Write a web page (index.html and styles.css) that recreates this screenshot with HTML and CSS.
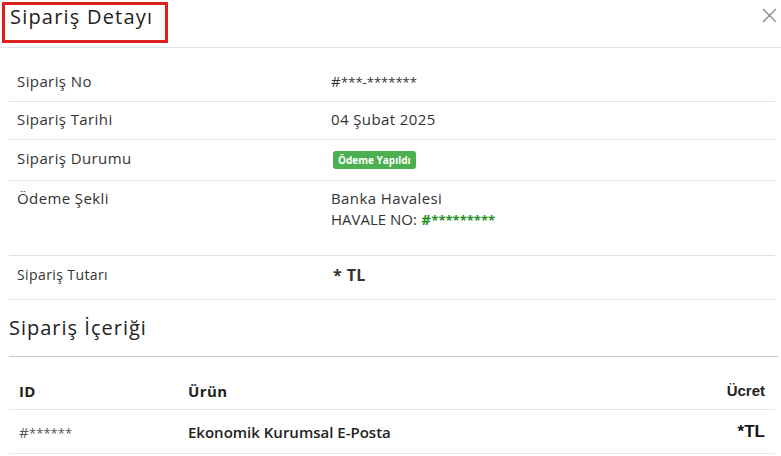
FILE: index.html
```html
<!DOCTYPE html>
<html lang="tr">
<head>
<meta charset="utf-8">
<title>Sipariş Detayı</title>
<link rel="stylesheet" href="styles.css">
</head>
<body>
<div class="modal">
  <div class="modal-header">
    <h4 class="modal-title">Sipariş Detayı</h4>
    <button class="close" aria-label="Kapat">
      <svg width="15" height="15" viewBox="0 0 15 15"><path d="M1 1L14 14M14 1L1 14" stroke="#8a8a8a" stroke-width="1.4" fill="none"/></svg>
    </button>
  </div>
  <div class="modal-body">
    <table class="details">
      <tr class="r1"><td class="lbl">Sipariş No</td><td class="val">#<span class="stars">***-*******</span></td></tr>
      <tr class="r1"><td class="lbl">Sipariş Tarihi</td><td class="val">04 Şubat 2025</td></tr>
      <tr class="status-row"><td class="lbl">Sipariş Durumu</td><td class="val"><span class="badge">Ödeme Yapıldı</span></td></tr>
      <tr class="pay-row"><td class="lbl">Ödeme Şekli</td><td class="val">Banka Havalesi<br><span class="caps">HAVALE NO:</span> <b class="green">#<span class="stars">*********</span></b></td></tr>
      <tr class="total-row"><td class="lbl small">Sipariş Tutarı</td><td class="val"><b class="total">* TL</b></td></tr>
    </table>
    <h4 class="section-title">Sipariş İçeriği</h4>
    <table class="items">
      <thead>
        <tr><th class="c-id">ID</th><th class="c-prod">Ürün</th><th class="c-price">Ücret</th></tr>
      </thead>
      <tbody>
        <tr><td class="c-id muted">#<span class="stars">******</span></td><td class="c-prod strong">Ekonomik Kurumsal E-Posta</td><td class="c-price price">*TL</td></tr>
      </tbody>
    </table>
  </div>
</div>
</body>
</html>
```
FILE: styles.css
```css
html, body {
  margin: 0;
  padding: 0;
  background: #fff;
}
body {
  font-family: "Open Sans", "Liberation Sans", sans-serif;
  color: #333;
  font-size: 15px;
  letter-spacing: 0.4px;
}
.modal {
  width: 781px;
}
.modal-header {
  display: flex;
  align-items: flex-start;
  justify-content: space-between;
  height: 48px;
  border-bottom: 1px solid #e5e5e5;
  padding: 2px 4px 0 2px;
  box-sizing: border-box;
}
.modal-title {
  margin: 0;
  width: 166px;
  height: 41px;
  box-sizing: border-box;
  border: 3px solid #e0201e;
  padding: 0 0 0 5px;
  font-size: 20px;
  font-weight: 400;
  letter-spacing: 1.2px;
  line-height: 24px;
  color: #222;
}
.close {
  background: none;
  border: 0;
  padding: 0;
  margin-top: 6px;
  width: 15px;
  height: 15px;
  display: flex;
}
.modal-body {
  padding: 16px 6px 0 9px;
}
table {
  width: 100%;
  border-collapse: collapse;
}
.details td {
  padding: 8px 8px 7px;
  line-height: 22px;
  border-bottom: 1px solid #e2e2e2;
  vertical-align: top;
  color: #333;
}
.details .r1 td {
  padding-top: 6px;
  padding-bottom: 9px;
}
.details .lbl {
  width: 298px;
}
.stars {
  font-size: 13px;
  line-height: 1;
  letter-spacing: 0;
}
.caps {
  letter-spacing: 0;
}
.status-row td {
  padding-top: 7px;
  padding-bottom: 11px;
}
.badge {
  display: inline-block;
  margin-left: 2px;
  background: #4caf50;
  color: #fff;
  font-size: 10px;
  font-weight: 700;
  letter-spacing: 0;
  line-height: 18px;
  padding: 0 5px;
  border-radius: 3px;
  vertical-align: middle;
}
.pay-row td {
  line-height: 21px;
  padding-top: 7px;
  padding-bottom: 25px;
}
.green {
  color: #1d901d;
}
.total-row td {
  padding-top: 8px;
  padding-bottom: 13px;
}
.small {
  font-size: 14px;
}
.total {
  font-size: 16px;
  margin-left: 2px;
}
.section-title {
  margin: 0 -3px 0 0;
  font-size: 20px;
  font-weight: 400;
  letter-spacing: 1px;
  color: #222;
  line-height: 26px;
  padding: 15px 0;
  border-bottom: 1px solid #c8c8c8;
}
.items {
  margin-top: 15px;
}
.items th, .items td {
  padding: 8px 10px 7px;
  line-height: 22px;
  border-bottom: 1px solid #e8e8e8;
  text-align: left;
}
.items td {
  padding-top: 11px;
  padding-bottom: 10px;
}
.items th {
  color: #222;
  font-weight: 700;
}
.items .c-id {
  width: 149px;
}
.items .c-price {
  text-align: right;
  letter-spacing: 0;
  font-family: "Liberation Sans", Arial, sans-serif;
}
.muted {
  color: #555;
}
.strong {
  font-weight: 600;
  letter-spacing: 0;
  color: #222;
}
.price {
  font-size: 17px;
  font-weight: 700;
  color: #111;
}
```
